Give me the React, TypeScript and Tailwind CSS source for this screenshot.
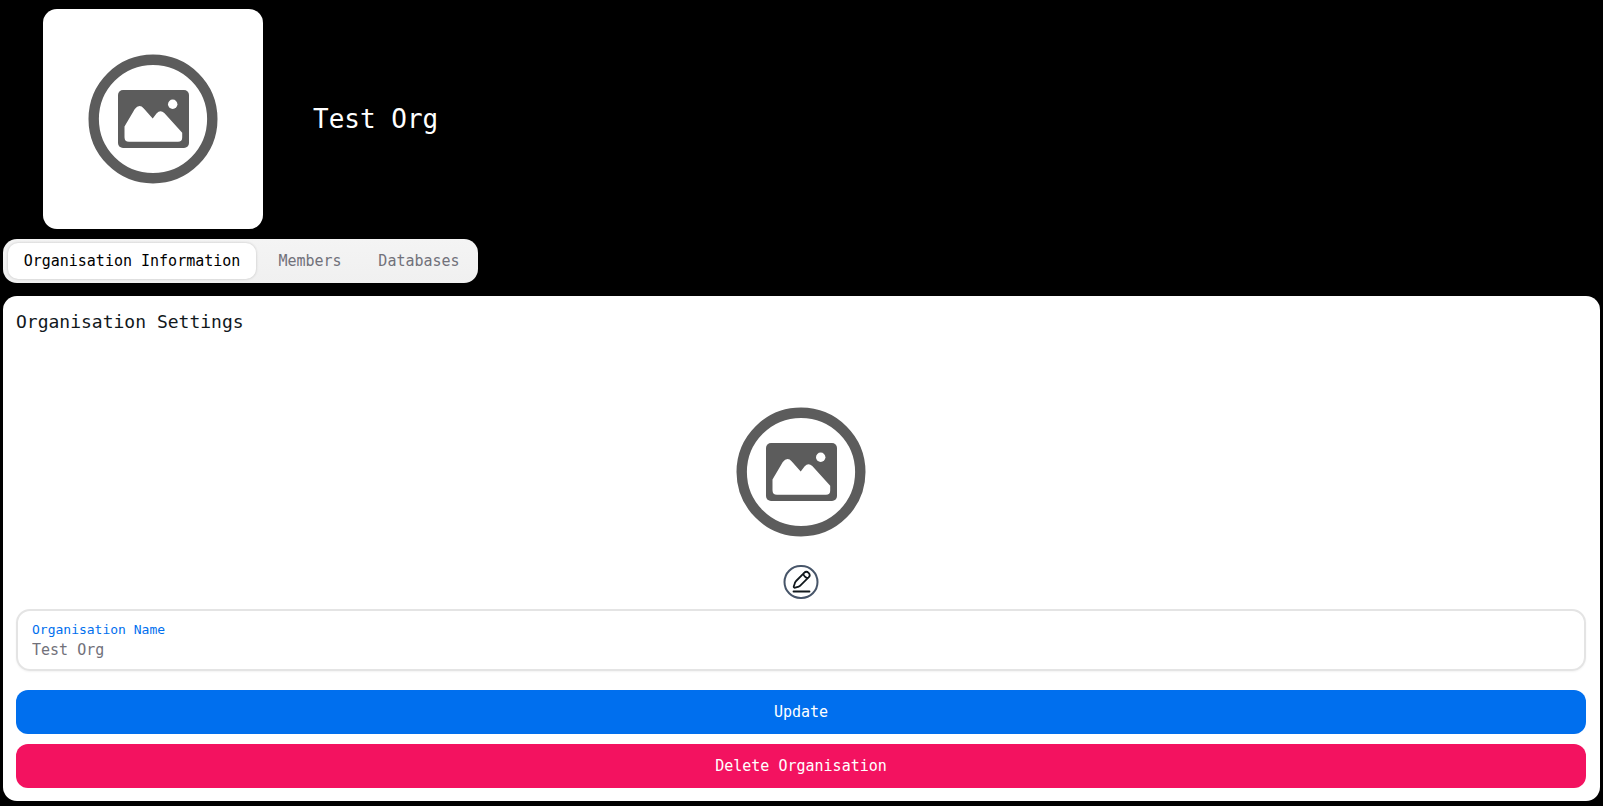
import { useState } from "react";

function ImagePlaceholder() {
  return (
    <svg viewBox="0 0 220 220" className="size-[220px]" role="img" aria-label="Organisation logo">
      <circle cx="110" cy="110" r="59.3" fill="none" stroke="#5c5c5c" strokeWidth="10.4" />
      <rect x="75" y="81" width="71" height="58" rx="5" fill="#5c5c5c" />
      <circle cx="129.7" cy="95.3" r="4.7" fill="#fff" />
      <path
        d="M81.5 117.5 L91.8 100 Q96.3 94.2 100.8 99.4 L109.7 109.4 L113.7 104.3 Q117.3 100.2 121.3 104 L139.2 123.7 V128.5 Q139.2 132.8 135 132.8 H86 Q81.5 132.8 81.5 128.3 Z"
        fill="#fff"
      />
    </svg>
  );
}

function PenIcon() {
  return (
    <svg viewBox="0 0 24 24" className="size-6" fill="none" stroke="#11181c" strokeWidth="1.8" strokeLinecap="round" aria-hidden="true">
      <path d="M4 21.5h16" />
      <path d="M13.9 3.7l.7-.8a3.15 3.15 0 0 1 4.5 4.5l-.8.7M13.9 3.7s.1 1.6 1.5 3c1.3 1.3 2.9 1.4 2.9 1.4M13.9 3.7L7.1 10.5c-.5.5-.7.7-.9 1-.2.3-.4.6-.6.9-.1.3-.2.7-.4 1.3l-.9 2.6c-.3.9.5 1.7 1.4 1.4l2.6-.9c.6-.2 1-.3 1.3-.4.3-.2.6-.4.9-.6.3-.2.5-.4 1-.9l6.8-6.8" />
    </svg>
  );
}

const tabs = [
  { label: "Organisation Information", width: "min-w-[248px]" },
  { label: "Members", width: "min-w-[92px]" },
  { label: "Databases", width: "min-w-[110px]" },
];

export default function App() {
  const [active, setActive] = useState(0);
  const [name, setName] = useState("Test Org");

  return (
    <div className="min-h-screen bg-black px-[3px] pt-[9px] pb-[5px] font-['DejaVu_Sans_Mono','Liberation_Mono',monospace] text-[15px] leading-6 text-[#11181c]">
      <header className="flex items-center gap-[50px] pl-10">
        <div className="shrink-0 overflow-hidden rounded-[14px] bg-white">
          <ImagePlaceholder />
        </div>
        <h1 className="text-[26px] leading-9 text-white">Test Org</h1>
      </header>

      <div role="tablist" aria-label="Organisation" className="mt-[10px] flex h-11 w-fit items-center gap-2 rounded-[14px] bg-linear-to-b from-[#f4f4f4] to-[#f0f0f0] py-1 pr-1 pl-[5px]">
        {tabs.map((tab, i) => (
          <button
            key={tab.label}
            role="tab"
            aria-selected={i === active}
            onClick={() => setActive(i)}
            className={`${tab.width} h-9 rounded-[10px] whitespace-nowrap ${
              i === active ? "bg-white text-black shadow-[0_0_3px_rgba(0,0,0,0.2)]" : "text-[#71717a]"
            }`}
          >
            {tab.label}
          </button>
        ))}
      </div>

      <main className="mt-[13px] rounded-[14px] bg-white pt-[14px] pr-[14px] pb-[13px] pl-[13px]">
        <h2 className="text-lg leading-6">Organisation Settings</h2>
        <div className="relative mx-auto mt-7 w-fit">
          <ImagePlaceholder />
          <button
            aria-label="Change logo"
            className="absolute bottom-[-17px] left-1/2 flex h-[34px] w-[35px] -translate-x-1/2 items-center justify-center rounded-full border-2 border-[#475569] bg-white"
          >
            <PenIcon />
          </button>
        </div>
        <div className="mt-[27px] flex h-[62px] flex-col justify-center rounded-[14px] border-2 border-[#e4e4e4] px-[14px] shadow-xs">
          <label htmlFor="org-name" className="text-[13px] leading-5 text-[#006fee]">
            Organisation Name
          </label>
          <input
            id="org-name"
            value={name}
            onChange={(e) => setName(e.target.value)}
            className="h-5 w-full bg-transparent leading-5 text-[#71717a] outline-none"
          />
        </div>
        <button className="mt-[19px] h-11 w-full rounded-[12px] bg-[#006fee] text-white">Update</button>
        <button className="mt-[10px] h-11 w-full rounded-[12px] bg-[#f31260] text-white">Delete Organisation</button>
      </main>
    </div>
  );
}
